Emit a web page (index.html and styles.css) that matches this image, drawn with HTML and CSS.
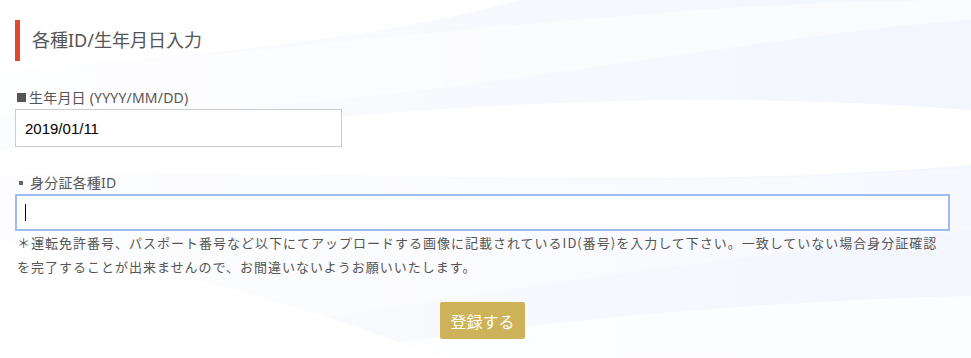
FILE: index.html
```html
<!DOCTYPE html>
<html lang="ja">
<head>
    <meta charset="UTF-8">
    <meta name="viewport" content="width=device-width, initial-scale=1.0">
    <title>各種ID/生年月日入力</title>
    <link rel="stylesheet" href="styles.css">
</head>
<body>

<svg class="bg-waves" viewBox="0 0 971 358" preserveAspectRatio="none" aria-hidden="true">
    <defs>
        <linearGradient id="fade-left" x1="0" y1="0" x2="1" y2="0">
            <stop offset="0" stop-color="#ffffff" stop-opacity="0.7"/>
            <stop offset="0.35" stop-color="#ffffff" stop-opacity="0.45"/>
            <stop offset="1" stop-color="#ffffff" stop-opacity="0"/>
        </linearGradient>
    </defs>
    <path d="M0 0 H971 V358 H0 Z" fill="#f3f6fd"/>
    <path d="M0 0 H520 C380 40 160 60 0 70 Z" fill="#ffffff" opacity="0.9"/>
    <path d="M0 70 C200 60 420 30 700 10 C820 2 900 0 971 0 V20 C820 30 600 70 380 95 C220 112 90 118 0 118 Z" fill="#ffffff" opacity="0.55"/>
    <path d="M0 150 C200 130 450 100 700 100 C820 100 900 105 971 110 V165 C860 175 700 180 540 178 C360 176 160 170 0 175 Z" fill="#ffffff" opacity="0.95"/>
    <path d="M0 175 C200 170 400 178 560 180 C720 182 860 175 971 168 V230 C800 250 600 275 440 300 C300 322 150 340 0 358 Z" fill="#ffffff" opacity="0.4"/>
    <path d="M0 240 C180 270 320 310 440 358 H0 Z" fill="#ffffff" opacity="0.95"/>
    <path d="M300 358 C520 320 780 300 971 296 V358 Z" fill="#ffffff" opacity="0.75"/>
    <path d="M0 0 H971 V358 H0 Z" fill="url(#fade-left)"/>
</svg>

<div class="form-page">
    <h2 class="section-title">各種ID/生年月日入力</h2>

    <div class="field">
        <label class="field-label" for="birthday"><span class="square"></span>生年月日 (YYYY/MM/DD)</label>
        <input class="text-input birthday-input" id="birthday" type="text" value="2019/01/11">
    </div>

    <div class="field field-id">
        <label class="field-label" for="id-number"><span class="dot"></span>身分証各種ID</label>
        <div class="input-wrap">
            <input class="text-input id-input" id="id-number" type="text">
            <span class="caret"></span>
        </div>
        <p class="note">＊運転免許番号、パスポート番号など以下にてアップロードする画像に記載されているID(番号)を入力して下さい。一致していない場合身分証確認を完了することが出来ませんので、お間違いないようお願いいたします。</p>
    </div>

    <div class="actions">
        <button class="submit-button" type="button">登録する</button>
    </div>
</div>

</body>
</html>
```

FILE: styles.css
```css
html, body {
    height: 100%;
}

body {
    margin: 0;
    position: relative;
    overflow: hidden;
    background-color: #fff;
    font-family: "Noto Sans", "Noto Sans CJK JP", sans-serif;
    color: #555;
}

.bg-waves {
    position: absolute;
    top: 0;
    left: 0;
    width: 100%;
    height: 100%;
    z-index: 0;
}

.form-page {
    position: relative;
    z-index: 1;
    padding: 20px 21px 0 15px;
}

.section-title {
    margin: 0;
    height: 41px;
    line-height: 40px;
    border-left: 5px solid #dc4a2b;
    padding-left: 12px;
    font-size: 18px;
    font-weight: normal;
    color: #555;
}

.field {
    margin-top: 26px;
}

.field-id {
    margin-top: 25px;
}

.field-label {
    display: flex;
    align-items: center;
    height: 20px;
    padding-left: 2px;
    margin-bottom: 2px;
    font-size: 14px;
    letter-spacing: 0.2px;
    color: #555;
}

.square {
    width: 9px;
    height: 9px;
    margin: 1px 3px 0 0;
    background-color: #555;
}

.dot {
    width: 4px;
    height: 4px;
    margin: 1px 7px 0 2px;
    background-color: #666;
}

.text-input {
    display: block;
    box-sizing: border-box;
    height: 38px;
    margin: 0;
    padding: 0 9px;
    background-color: #fff;
    border: 1px solid #ccc;
    border-radius: 0;
    outline: none;
    font-family: "Liberation Sans", Arial, sans-serif;
    font-size: 15px;
    color: #000;
}

.birthday-input {
    width: 327px;
}

.input-wrap {
    position: relative;
}

.id-input {
    width: 100%;
    height: 37px;
    border: 2px solid #9dbcf2;
}

.caret {
    position: absolute;
    left: 10px;
    top: 10px;
    width: 1px;
    height: 17px;
    background-color: #000;
}

.note {
    margin: 0;
    padding-left: 2px;
    font-family: "Noto Sans CJK JP", sans-serif;
    font-size: 13px;
    line-height: 24px;
    letter-spacing: 1px;
    color: #555;
}

.actions {
    display: flex;
    justify-content: center;
    margin-top: 23px;
}

.submit-button {
    width: 85px;
    height: 37px;
    padding: 0;
    background-color: #ceb25a;
    color: #fff;
    border: none;
    border-radius: 2px;
    font-family: "Noto Sans CJK JP", sans-serif;
    font-size: 16px;
    cursor: pointer;
}
```
